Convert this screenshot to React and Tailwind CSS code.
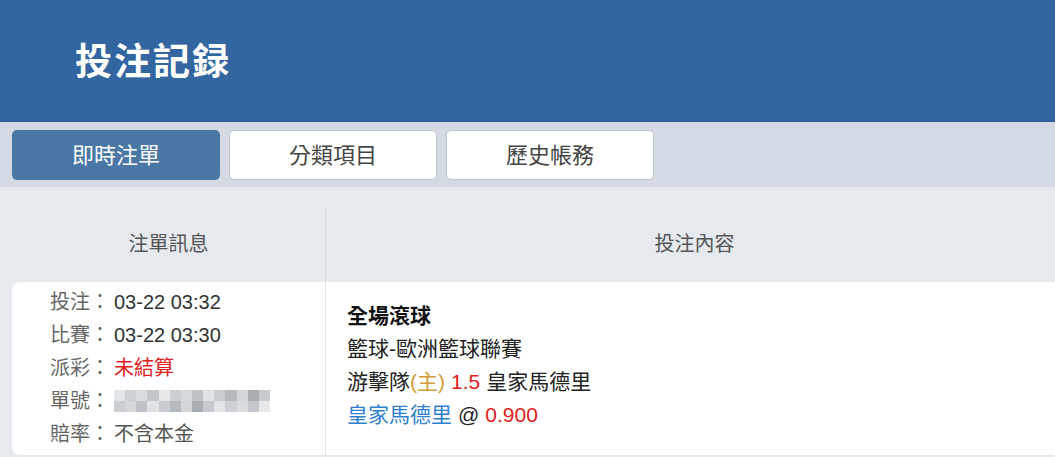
import React, { useState } from 'react';

const FONT = { fontFamily: '"Liberation Sans", "Noto Sans CJK TC", sans-serif' };

const tabs = ["即時注單", "分類項目", "歷史帳務"];

function Blurred() {
  // pixelated order number
  const shades = ["#e2e5e8", "#cdd1d5", "#d9dcdf", "#c4c8cc", "#e6e8ea", "#cbcfd3", "#d5d8db", "#bfc3c7", "#dfe2e5", "#c9cdd1", "#b5babf", "#d3d6d9", "#a9aeb3", "#c6cace"];
  return (
    <div className="flex h-[22px] w-[156px]">
      {shades.map((c, i) => (
        <div key={i} className="flex-1 flex flex-col">
          <div className="flex-1" style={{ background: c }} />
          <div className="flex-1" style={{ background: shades[(i + 5) % shades.length] }} />
        </div>
      ))}
    </div>
  );
}

function InfoRow({ label, children }) {
  return (
    <div className="flex items-center h-[33px]">
      <span className="text-[#666] w-[64px]">{label}：</span>
      {children}
    </div>
  );
}

export default function App() {
  const [active, setActive] = useState("即時注單");

  return (
    <div className="w-[1055px] h-[457px] overflow-hidden bg-[#e6e9ee]" style={FONT}>
      {/* HEADER */}
      <div className="h-[121px] bg-[#3366a0] flex items-center pl-[75px] pb-[2px]">
        <h1 className="text-white text-[37px] font-bold tracking-[2px]" style={{ fontFamily: '"Noto Sans CJK TC", serif' }}>
          投注記録
        </h1>
      </div>

      {/* TABS */}
      <div className="h-[66px] bg-[#d3dae3] flex gap-[9px] px-[12px] pt-[8px] border-t border-[#2d5d93]">
        {tabs.map(t => (
          <button
            key={t}
            onClick={() => setActive(t)}
            className={active === t
              ? "w-[208px] h-[50px] rounded-[5px] bg-[#4a77a3] text-white text-[22px]"
              : "w-[208px] h-[50px] rounded-[5px] bg-white text-[#444] text-[22px] border border-[#bcc5ce]"}
          >
            {t}
          </button>
        ))}
      </div>

      {/* TABLE HEAD */}
      <div className="flex h-[95px] pt-[21px]">
        <div className="w-[325px] pl-[12px] flex items-center justify-center text-[20px] text-[#555] pb-[2px]">
          注單訊息
        </div>
        <div className="flex-1 border-l border-[#d6dbe1] flex items-center justify-center text-[20px] text-[#555] pb-[2px] pl-[8px]">
          投注內容
        </div>
      </div>

      {/* ROW */}
      <div className="flex ml-[12px] bg-white rounded-l-[8px] h-[173px] text-[20px]">
        <div className="w-[313px] pl-[38px] pt-[3px]">
          <InfoRow label="投注"><span className="text-[#333]">03-22 03:32</span></InfoRow>
          <InfoRow label="比賽"><span className="text-[#333]">03-22 03:30</span></InfoRow>
          <InfoRow label="派彩"><span className="text-[#e0201c]">未結算</span></InfoRow>
          <InfoRow label="單號"><Blurred /></InfoRow>
          <InfoRow label="賠率"><span className="text-[#555]">不含本金</span></InfoRow>
        </div>
        <div className="flex-1 border-l border-[#e3e6ea] pl-[21px] pt-[17px] text-[#222] text-[21px]">
          <div className="h-[33px] flex items-center font-bold text-[#111]">全場滾球</div>
          <div className="h-[33px] flex items-center">籃球-歐洲籃球聯賽</div>
          <div className="h-[33px] flex items-center">
            游擊隊<span className="text-[#d49a3c]">(主)</span>
            <span className="text-[#e0201c] ml-[6px]">1.5</span>
            <span className="ml-[6px]">皇家馬德里</span>
          </div>
          <div className="h-[33px] flex items-center">
            <span className="text-[#2f7fd0]">皇家馬德里</span>
            <span className="ml-[6px]">@</span>
            <span className="text-[#e0201c] ml-[6px]">0.900</span>
          </div>
        </div>
      </div>

      {/* NEXT ROW (partially visible) */}
      <div className="flex ml-[12px] mt-[2px] bg-white rounded-l-[8px] h-[40px]">
        <div className="w-[313px]" />
        <div className="flex-1 border-l border-[#e3e6ea]" />
      </div>
    </div>
  );
}
